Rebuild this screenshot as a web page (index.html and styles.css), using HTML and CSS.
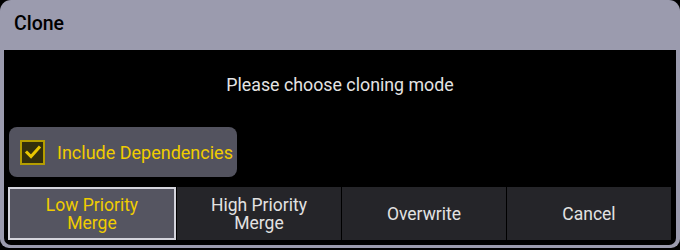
FILE: index.html
```html
<!DOCTYPE html>
<html>
<head>
<meta charset="utf-8">
<link rel="stylesheet" href="styles.css">
</head>
<body>
<div class="window">
  <div class="titlebar">Clone</div>
  <div class="content">
    <div class="message">Please choose cloning mode</div>
    <div class="option-row">
      <div class="check-pill">
        <span class="checkbox">
          <svg width="20" height="20" viewBox="0 0 20 20"><path d="M4 10.5 L8 14.5 L16 5.5" fill="none" stroke="#e8c600" stroke-width="3" stroke-linecap="square"/></svg>
        </span>
        <span class="check-label">Include Dependencies</span>
      </div>
    </div>
    <div class="buttons">
      <div class="btn active">Low Priority<br>Merge</div>
      <div class="btn">High Priority<br>Merge</div>
      <div class="btn">Overwrite</div>
      <div class="btn">Cancel</div>
    </div>
  </div>
</div>
</body>
</html>
```

FILE: styles.css
```css
html, body {
  margin: 0;
  padding: 0;
  background: #000;
}
body {
  width: 680px;
  height: 250px;
  font-family: Roboto, "Liberation Sans", sans-serif;
}
.window {
  width: 680px;
  height: 248px;
  background: #9b9bae;
  border-radius: 11px 11px 9px 9px;
  display: flex;
  flex-direction: column;
  box-sizing: border-box;
  padding: 0 4px 3px 4px;
}
.titlebar {
  height: 50px;
  line-height: 48px;
  padding-left: 10px;
  font-size: 19.5px;
  font-weight: 500;
  color: #000;
  box-sizing: border-box;
}
.content {
  flex: 1;
  background: #000;
  border-radius: 0 0 7px 7px;
  display: flex;
  flex-direction: column;
}
.message {
  height: 70px;
  display: flex;
  align-items: center;
  justify-content: center;
  color: #e4e4e4;
  font-size: 17.8px;
  padding-bottom: 1px;
  box-sizing: border-box;
}
.option-row {
  padding: 7px 0 0 5px;
  height: 67px;
  box-sizing: border-box;
}
.check-pill {
  display: inline-flex;
  align-items: center;
  width: 228px;
  height: 50px;
  background: #53535f;
  border-radius: 8px;
  box-sizing: border-box;
  padding-left: 11px;
}
.checkbox {
  width: 25px;
  height: 25px;
  box-sizing: border-box;
  border: 2px solid #b59e00;
  background: #332f0c;
  display: flex;
  align-items: center;
  justify-content: center;
}
.check-label {
  margin-left: 12px;
  color: #f0cc00;
  font-size: 18px;
}
.buttons {
  display: flex;
  gap: 1px;
  padding: 0 5px 0 4px;
  height: 53px;
}
.btn {
  flex: 1;
  background: #252529;
  color: #e2e2e2;
  font-size: 17.5px;
  line-height: 18px;
  text-align: center;
  display: flex;
  align-items: center;
  justify-content: center;
  box-sizing: border-box;
}
.btn.active {
  background: #555561;
  border: 2px solid #d4d4dc;
  color: #f0cc00;
}
```
